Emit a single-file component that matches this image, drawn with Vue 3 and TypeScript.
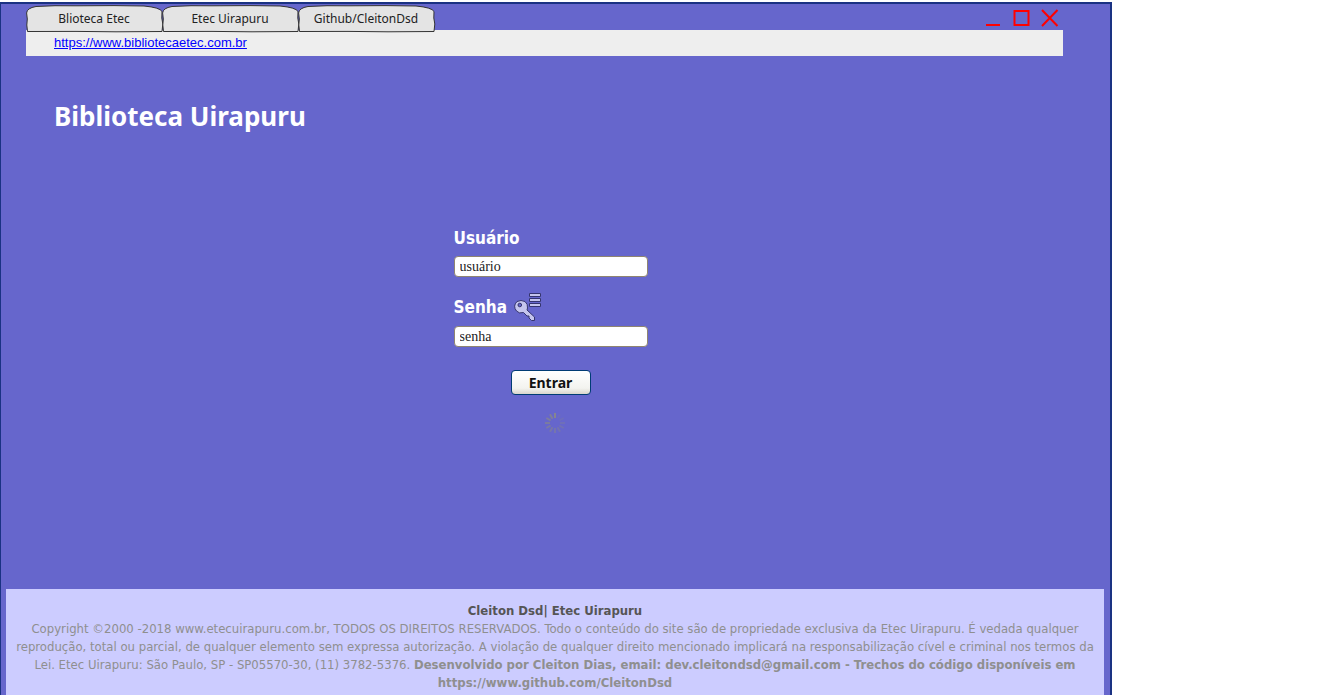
<script setup lang="ts">
import { ref } from 'vue'

interface Tab {
  label: string
  url: string
}

const tabs: Tab[] = [
  { label: 'Blioteca Etec', url: 'https://www.bibliotecaetec.com.br' },
  { label: 'Etec Uirapuru', url: 'https://www.etecuirapuru.com.br' },
  { label: 'Github/CleitonDsd', url: 'https://www.github.com/CleitonDsd' },
]

const active = ref(0)
const user = ref('usuário')
const password = ref('senha')
const spokes = Array.from({ length: 12 }, (_, i) => ({
  angle: i * 30,
  opacity: i === 0 ? 1 : 0.1 + (i / 12) * 0.8,
}))
</script>

<template>
  <div class="window">
    <header class="chrome">
      <div class="top-row">
        <nav class="tabs">
          <button
            v-for="(tab, i) in tabs"
            :key="tab.label"
            type="button"
            class="tab"
            @click="active = i"
          >
            <svg class="tab-shape" viewBox="0 0 138 28" preserveAspectRatio="none" aria-hidden="true">
              <path
                d="M1.5 26.500 L.8 20 L1.3 14 L.6 8 Q1 3 10 1.500 Q28 .3 50 .8 L88 .6 L118 1 Q134 2.500 136 6.500 L135.800 13 L136.800 19 L136 26.500 L90 26.800 L50 26.400 Z"
              />
            </svg>
            <span class="tab-label">{{ tab.label }}</span>
          </button>
        </nav>
        <div class="controls">
          <button type="button" class="control" aria-label="Minimizar">
            <svg viewBox="0 0 18 18"><path d="M1 16H15" /></svg>
          </button>
          <button type="button" class="control" aria-label="Maximizar">
            <svg viewBox="0 0 18 18"><path d="M1.500 2H15.500V16H1.500Z" /></svg>
          </button>
          <button type="button" class="control" aria-label="Fechar">
            <svg viewBox="0 0 18 18"><path d="M1 1L16.500 17M16.500 1L1 17" /></svg>
          </button>
        </div>
      </div>
      <div class="address">
        <a :href="tabs[active].url">{{ tabs[active].url }}</a>
      </div>
    </header>

    <main class="content">
      <h1 class="title">Biblioteca Uirapuru</h1>
      <form class="login" @submit.prevent>
        <label class="label" for="user">Usuário</label>
        <input id="user" v-model="user" class="field" type="text" />
        <label class="label label-key" for="password">
          Senha
          <svg class="key" viewBox="0 0 30 30" aria-hidden="true">
            <path d="M16.5 1.5h11v3h-11zM16.5 6.5h11v3h-11zM16.5 11.5h11v3h-11z" />
            <path
              fill-rule="evenodd"
              d="M4 9.5 Q8 7.500 12 9.500 Q15 12 14.500 16 L14 18 L21.500 25 V28.500 H18.500 L16 26 V24 H14 L10.500 20.500 Q6 22 3.500 19 Q-.5 14 4 9.500 Z M5 13 a1.800 1.800 0 1 0 3.600 0 a1.800 1.800 0 1 0 -3.600 0 Z"
            />
          </svg>
        </label>
        <input id="password" v-model="password" class="field" type="text" />
        <button class="submit" type="submit">Entrar</button>
        <svg class="spinner" viewBox="-10 -10 20 20" role="img" aria-label="Carregando">
          <line
            v-for="spoke in spokes"
            :key="spoke.angle"
            x1="0"
            y1="-5"
            x2="0"
            y2="-10"
            :transform="`rotate(${spoke.angle})`"
            :opacity="spoke.opacity"
          />
        </svg>
      </form>
    </main>

    <footer class="footer">
      <strong class="owner">Cleiton Dsd| Etec Uirapuru</strong>
      <p class="legal">
        Copyright ©2000 -2018 www.etecuirapuru.com.br, TODOS OS DIREITOS RESERVADOS. Todo o conteúdo do site são de propriedade exclusiva da Etec Uirapuru. É vedada qualquer<br />
        reprodução, total ou parcial, de qualquer elemento sem expressa autorização. A violação de qualquer direito mencionado implicará na responsabilização cível e criminal nos termos da<br />
        Lei. Etec Uirapuru: São Paulo, SP - SP05570-30, (11) 3782-5376.
        <b>Desenvolvido por Cleiton Dias, email: dev.cleitondsd@gmail.com - Trechos do código disponíveis em<br />
        https://www.github.com/CleitonDsd</b>
      </p>
    </footer>
  </div>
</template>

<style>
body {
  margin: 0;
  background: #fff;
}
</style>

<style scoped>
.window {
  box-sizing: border-box;
  display: flex;
  flex-direction: column;
  width: calc(100% - 213px);
  min-height: calc(100vh - 2px);
  margin-top: 2px;
  border: solid #1a3283;
  border-width: 2px 2px 0 1px;
  background: #6666cc;
}

.chrome {
  padding: 0 47px 0 25px;
}

.top-row {
  display: flex;
  justify-content: space-between;
  height: 26px;
}

.tabs {
  display: flex;
}

.tab {
  position: relative;
  width: 136px;
  height: 29px;
  padding: 1px 0 0;
  border: 0;
  background: none;
  color: #222;
  font: 12px/28px "Noto Sans", sans-serif;
  white-space: nowrap;
}

.tab-shape {
  position: absolute;
  top: 1px;
  left: 0;
  width: 138px;
  height: 28px;
  fill: #e4e4e4;
  stroke: #333;
}

.tab-label {
  position: relative;
}

.controls {
  display: flex;
  gap: 10px;
  padding: 5px 4px 0 0;
}

.control {
  width: 18px;
  height: 18px;
  padding: 0;
  border: 0;
  background: none;
}

.control svg {
  display: block;
  fill: none;
  stroke: #f00;
  stroke-width: 2;
}

.address {
  height: 26px;
  padding-left: 28px;
  background: #eee;
  font: 13px/26px "Liberation Sans", Arial, sans-serif;
}

.address a {
  color: #00f;
}

.content {
  flex: 1;
}

.title {
  margin: 42px 53px 0;
  color: #fff;
  font: bold 26px/36px "Noto Sans", Tahoma, sans-serif;
}

.login {
  display: flex;
  flex-direction: column;
  width: 194px;
  margin: 92px auto 0;
  padding-right: 10px;
}

.label {
  display: flex;
  align-items: center;
  height: 24px;
  margin-bottom: 6px;
  color: #fff;
  font: bold 17px/24px "DejaVu Sans Condensed", Tahoma, sans-serif;
}

.label-key {
  gap: 6px;
  height: 30px;
  margin: 15px 0 4px;
}

.key {
  width: 30px;
  height: 30px;
  fill: #c5c5ed;
  stroke: #35356f;
}

.field {
  box-sizing: border-box;
  width: 100%;
  height: 21px;
  padding: 0 5px;
  border: 1px solid #8f8571;
  border-radius: 4px;
  background: #fff;
  color: #222;
  font: 14px "Liberation Serif", "Times New Roman", serif;
}

.submit {
  align-self: center;
  width: 80px;
  height: 25px;
  margin-top: 23px;
  padding: 0;
  border: 1px solid #003c74;
  border-radius: 4px;
  background: linear-gradient(#fff, #f3f3ef 75%, #d9d5cc);
  color: #111;
  font: bold 14px/23px "Noto Sans", Tahoma, sans-serif;
}

.spinner {
  align-self: center;
  width: 20px;
  height: 20px;
  margin: 18px 0 0 8px;
  stroke: #85858f;
  stroke-width: 2;
}

.footer {
  box-sizing: border-box;
  margin: 0 6px 0 5px;
  padding: 13px 0 3px;
  background: #ccccff;
  color: #8f8f8f;
  font: 13px/18px "DejaVu Sans Condensed", "Trebuchet MS", sans-serif;
  text-align: center;
}

.owner {
  color: #555;
}

.legal {
  margin: 0;
}
</style>
